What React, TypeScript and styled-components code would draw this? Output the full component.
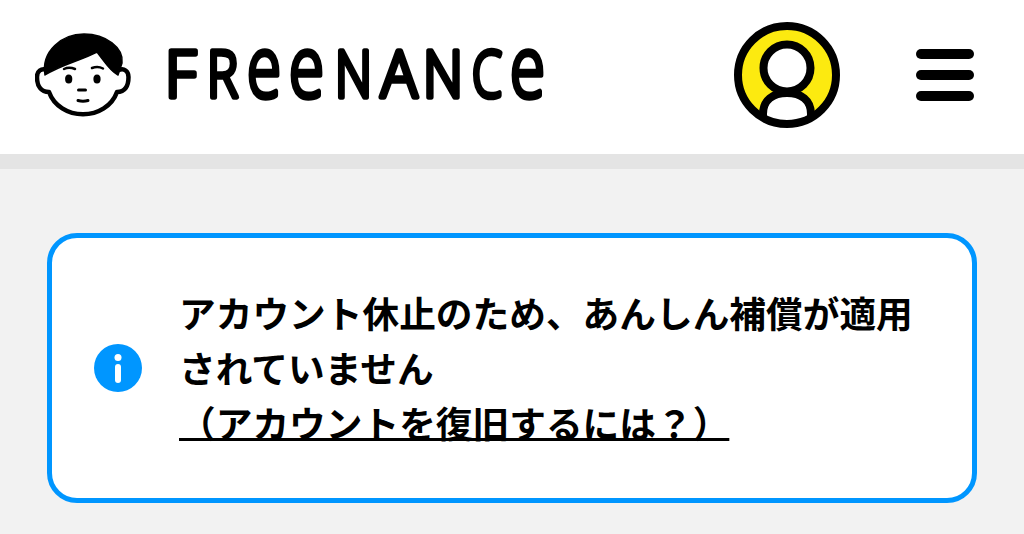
import React from "react";
import styled, { createGlobalStyle } from "styled-components";

const Global = createGlobalStyle`
  html, body { margin: 0; padding: 0; background: #f2f2f2; }
  body { font-family: "Noto Sans CJK JP", "Noto Sans", sans-serif; overflow: hidden; }
`;

const Page = styled.div`
  width: 1024px;
  height: 534px;
  display: flex;
  flex-direction: column;
`;

const Header = styled.header`
  height: 154px;
  box-sizing: border-box;
  background: #fff;
  display: flex;
  align-items: center;
  padding: 0 50px 4px 35px;
  flex: none;
`;

const Stripe = styled.div`
  height: 15px;
  background: #e4e4e4;
  flex: none;
`;

const Face = styled.svg`
  width: 96px;
  height: 84px;
  flex: none;
`;

const Wordmark = styled.svg`
  width: 382px;
  height: 60px;
  margin-left: 34px;
  flex: none;
`;

const Avatar = styled.svg`
  width: 106px;
  height: 106px;
  margin-left: auto;
  flex: none;
`;

const Menu = styled.div`
  width: 58px;
  margin-left: 76px;
  display: flex;
  flex-direction: column;
  gap: 11px;
  flex: none;
`;

const MenuBar = styled.span`
  display: block;
  height: 10px;
  border-radius: 5px;
  background: #000;
`;

const Main = styled.main`
  flex: 1;
  padding: 64px 47px 0;
  background: #f2f2f2;
`;

const Notice = styled.section`
  box-sizing: border-box;
  width: 930px;
  height: 270px;
  border: 5px solid #0096ff;
  border-radius: 30px;
  background: #fff;
  display: flex;
  align-items: center;
  gap: 37px;
  padding: 0 48px 0 42px;
`;

const InfoIcon = styled.svg`
  width: 48px;
  height: 48px;
  flex: none;
`;

const Message = styled.div`
  font-size: 36.7px;
  font-weight: 700;
  line-height: 55px;
  color: #000;
  margin-bottom: 2px;
`;

const HelpLink = styled.a`
  display: block;
  color: #000;
  text-decoration: underline;
  text-decoration-thickness: 2.5px;
  text-decoration-skip-ink: auto;
  text-underline-offset: 0;
`;

const letters: { c: string; x: number; w: number; low?: boolean }[] = [
  { c: "F", x: 0, w: 31 },
  { c: "R", x: 42, w: 31 },
  { c: "e", x: 82, w: 34, low: true },
  { c: "e", x: 124, w: 35, low: true },
  { c: "N", x: 170, w: 37 },
  { c: "A", x: 216, w: 36 },
  { c: "N", x: 258, w: 40 },
  { c: "C", x: 307, w: 30 },
  { c: "e", x: 345, w: 35, low: true },
];

export default function App() {
  return (
    <Page>
      <Global />
      <Header>
        <Face viewBox="15 18 96 84" aria-label="face">
          <path
            d="M27 55 C21 53 17 56 17 62 C17 71 21 77 29 77 C34 91 48 99.3 63 99.3 C78 99.3 92 91 97 77 C105 77 108.5 71 108.5 62 C108.5 56 104 53 99 55"
            fill="#fff"
            stroke="#000"
            strokeWidth="4.5"
            strokeLinejoin="round"
            strokeLinecap="round"
          />
          <path
            d="M25 60 C21 36 42 19 64 19 C86 19 104 33 102 48 L98 60 C90 56 84 46 77 37 C62 45 40 50 25 60 Z"
            fill="#000"
            stroke="#000"
            strokeWidth="1.5"
            strokeLinejoin="round"
          />
          <path d="M44 54 Q49 51.5 55 54" fill="none" stroke="#000" strokeWidth="2.5" strokeLinecap="round" />
          <path d="M72 53 Q78 51 83 53.5" fill="none" stroke="#000" strokeWidth="2.5" strokeLinecap="round" />
          <ellipse cx="48.7" cy="64" rx="3.6" ry="4.5" fill="#000" />
          <ellipse cx="77" cy="64" rx="3.6" ry="4.5" fill="#000" />
          <path d="M58.5 75 H65.5" fill="none" stroke="#000" strokeWidth="3" strokeLinecap="round" />
          <path d="M58 85.5 Q63 87 68 85.5" fill="none" stroke="#000" strokeWidth="3" strokeLinecap="round" />
        </Face>
        <Wordmark viewBox="0 0 382 60" aria-label="FREENANCE">
          {letters.map((l, i) => (
            <text
              key={i}
              x={l.x}
              y={52}
              fontFamily="'Open Sans', sans-serif"
              fontWeight={300}
              fontSize={l.low ? 84 : 64}
              textLength={l.w}
              lengthAdjust="spacingAndGlyphs"
              fill="#000"
              stroke="#000"
              strokeWidth={5.5}
              strokeLinejoin="round"
              strokeLinecap="round"
            >
              {l.c}
            </text>
          ))}
        </Wordmark>
        <Avatar viewBox="0 0 106 106" aria-label="account">
          <defs>
            <clipPath id="avatarClip">
              <circle cx="53" cy="53" r="50" />
            </clipPath>
          </defs>
          <circle cx="53" cy="53" r="49" fill="#fcea10" />
          <g clipPath="url(#avatarClip)">
            <path
              d="M29 106 V92 C29 78 39 71 53 71 C67 71 77 78 77 92 V106 Z"
              fill="#fff"
              stroke="#000"
              strokeWidth="8"
            />
          </g>
          <circle cx="53" cy="46" r="23.5" fill="#fff" stroke="#000" strokeWidth="8" />
          <path d="M24 92 Q53 106 82 92 L82 106 L24 106 Z" fill="#000" clipPath="url(#avatarClip)" />
          <circle cx="53" cy="53" r="49" fill="none" stroke="#000" strokeWidth="8" />
        </Avatar>
        <Menu aria-label="menu">
          <MenuBar />
          <MenuBar />
          <MenuBar />
        </Menu>
      </Header>
      <Stripe />
      <Main>
        <Notice>
          <InfoIcon viewBox="0 0 48 48" aria-label="info">
            <circle cx="24" cy="24" r="24" fill="#0096ff" />
            <circle cx="24" cy="13.5" r="3.5" fill="#fff" />
            <rect x="21" y="20" width="6" height="19" rx="3" fill="#fff" />
          </InfoIcon>
          <Message>
            アカウント休止のため、あんしん補償が適用されていません
            <HelpLink href="#">（アカウントを復旧するには？）</HelpLink>
          </Message>
        </Notice>
      </Main>
    </Page>
  );
}
